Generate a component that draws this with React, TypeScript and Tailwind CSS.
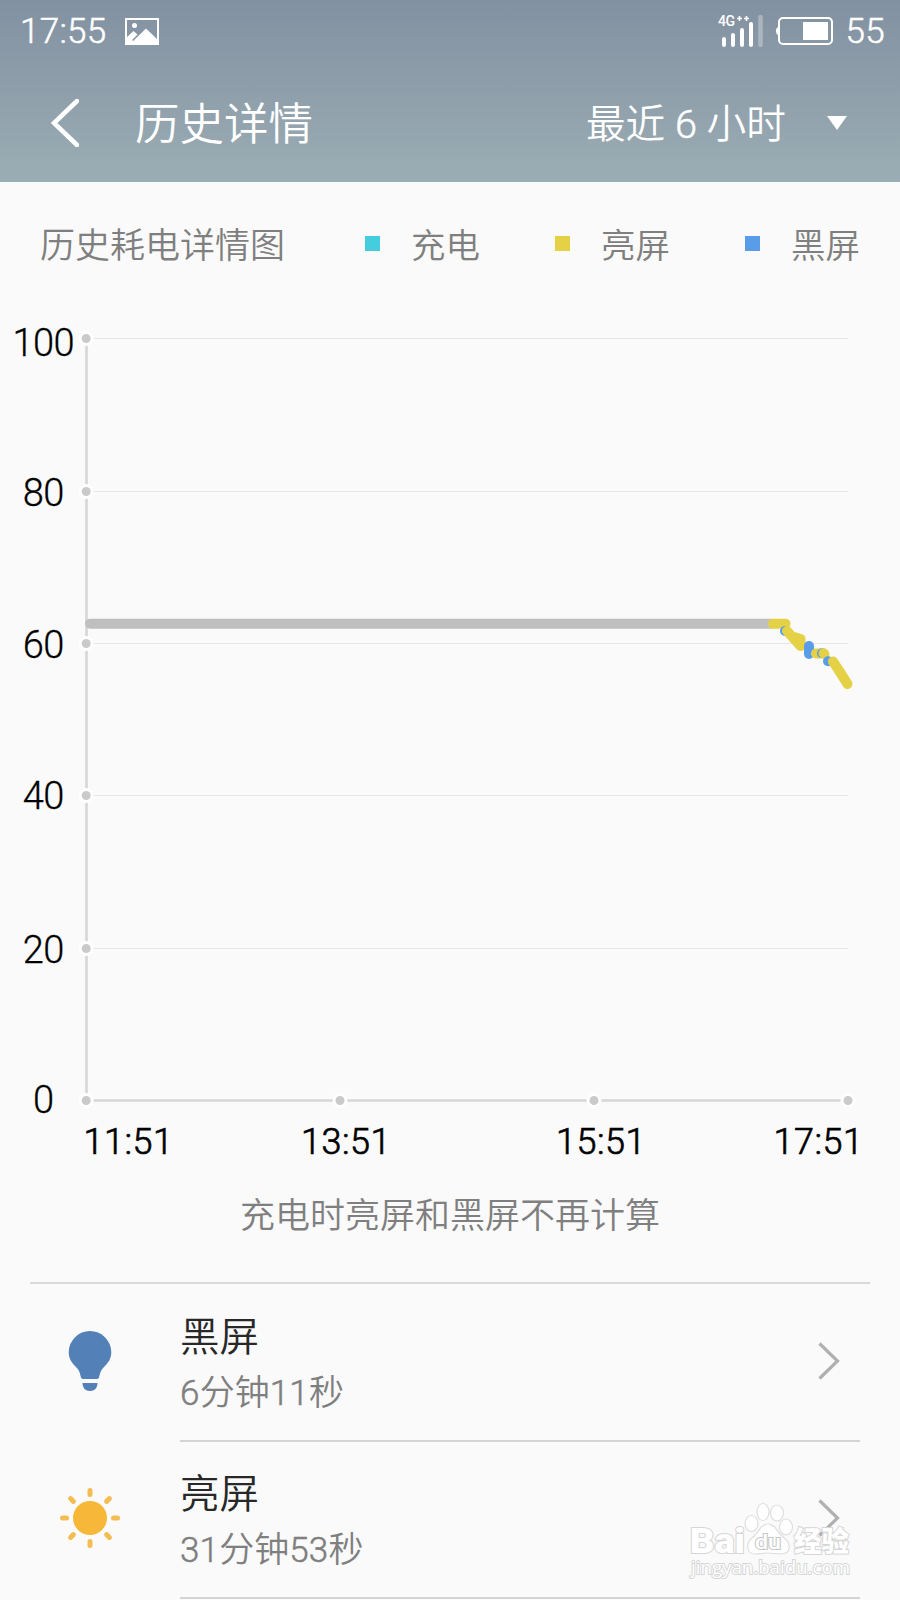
import type { ReactNode } from "react";

interface LegendItem {
  label: string;
  color: string;
}

interface UsageRowProps {
  icon: ReactNode;
  title: string;
  duration: string;
}

const LEGEND: LegendItem[] = [
  { label: "充电", color: "bg-[#44cddc]" },
  { label: "亮屏", color: "bg-[#e5d146]" },
  { label: "黑屏", color: "bg-[#599ce8]" },
];

const LEVELS = [
  { value: 100, y: 338.5, baseline: 356 },
  { value: 80, y: 491.5, baseline: 505.5 },
  { value: 60, y: 643.5, baseline: 657.5 },
  { value: 40, y: 795.5, baseline: 809 },
  { value: 20, y: 948.5, baseline: 962.5 },
  { value: 0, y: 1100.5, baseline: 1112.5 },
];

const TIMES = [
  { label: "11:51", x: 86.5, textX: 128.5 },
  { label: "13:51", x: 340, textX: 346 },
  { label: "15:51", x: 594, textX: 601 },
  { label: "17:51", x: 848, textX: 818.5 },
];

function StatusBar() {
  return (
    <div className="flex h-[62px] items-center justify-between pr-[15px] pl-5 text-[35px] font-light">
      <div className="flex items-center gap-[18px]">
        <span className="pt-[3px] tracking-[0.3px] [-webkit-text-stroke:0.5px_white]">17:55</span>
        <svg width="34" height="27" viewBox="0 0 34 27" fill="none">
          <rect x="1" y="1" width="32" height="25" stroke="white" strokeWidth="2" />
          <circle cx="9.5" cy="7.5" r="2.5" fill="white" />
          <path d="M1 20 8.5 13l4 3.5L7 22l1.2 1L21 10.5 33 22v4H1z" fill="white" />
        </svg>
      </div>
      <div className="flex items-center">
        <svg width="46" height="34" viewBox="0 0 46 34" className="mr-[12px]">
          <text x="0" y="12" fontSize="14" fontWeight="500" fill="white" textLength="17">4G</text>
          <path d="M19 4.5h5M21.5 2v5M26 4.5h5M28.5 2v5" stroke="white" strokeWidth="1.6" />
          <path d="M6 25v6M15 21v10M24 16v15M33 10v21" stroke="white" strokeWidth="4" strokeLinecap="round" />
          <path d="M42.5 3v28" stroke="white" strokeOpacity=".3" strokeWidth="4.5" strokeLinecap="round" />
        </svg>
        <svg width="57" height="28" viewBox="0 0 57 28" className="mr-[13px]">
          <rect x="3" y="1" width="53" height="26" rx="4" fill="none" stroke="white" strokeWidth="2" />
          <path d="M3 10Q0 10 0 14t3 4z" fill="white" />
          <rect x="27" y="5" width="25" height="18" fill="white" />
        </svg>
        <span className="pt-[3px] tracking-[0.3px] [-webkit-text-stroke:0.5px_white]">55</span>
      </div>
    </div>
  );
}

function Header() {
  return (
    <header className="h-[182px] bg-linear-to-b from-[#8291a1] to-[#9badb4] text-white">
      <StatusBar />
      <div className="flex h-[120px] items-center pr-[52px] pl-[51px]">
        <svg width="28" height="48" viewBox="0 0 28 48" fill="none" stroke="white" strokeWidth="4.5" className="mt-[2px]">
          <path d="M26 2 3 24l23 22" strokeLinecap="round" />
        </svg>
        <h1 className="ml-[56px] pt-[7px] text-[44.5px] font-[350]">历史详情</h1>
        <button className="ml-auto flex items-center text-[39.7px] font-[350]">
          <span className="pt-[5px]">
            最近 <span className="[-webkit-text-stroke:0.5px_white]">6</span> 小时
          </span>
          <svg width="22" height="14" viewBox="0 0 22 14" fill="white" className="mt-[2px] ml-[40px]">
            <path d="M1 0h20L11 14z" />
          </svg>
        </button>
      </div>
    </header>
  );
}

function Legend() {
  return (
    <div className="flex h-[124px] items-center pl-10 text-[35px] font-[350] text-[#7f7f7f]">
      <span className="w-[325px] shrink-0 pt-[6px]">历史耗电详情图</span>
      {LEGEND.map(item => (
        <div key={item.label} className="flex w-[190px] shrink-0 items-center">
          <i className={`mr-[31px] mb-[2px] h-[15px] w-[15px] shrink-0 ${item.color}`} />
          <span className="pt-[6px] text-[34.5px]">{item.label}</span>
        </div>
      ))}
    </div>
  );
}

function BatteryChart() {
  return (
    <svg width="900" height="864" viewBox="0 306 900 864" className="block">
      {/* grid and axes */}
      {LEVELS.slice(0, 5).map(l => (
        <path key={l.value} d={`M93 ${l.y}H848`} stroke="#e6e6e6" strokeWidth="1" />
      ))}
      <path d="M86.5 338V1100.5H848" fill="none" stroke="#d6d6d6" strokeWidth="2.6" />
      {LEVELS.map(l => (
        <circle key={l.value} cx="86.2" cy={l.y} r="6" fill="#cacaca" stroke="#fefefe" strokeWidth="3" />
      ))}
      {TIMES.slice(1).map(t => (
        <circle key={t.label} cx={t.x} cy="1100.5" r="6" fill="#cacaca" stroke="#fefefe" strokeWidth="3" />
      ))}

      {/* battery level */}
      <g fill="none" strokeWidth="10" strokeLinecap="round" strokeLinejoin="round">
        <path d="M90 623.7H772" stroke="#bfbfbf" />
        <path d="M773 623.7H785.5" stroke="#e5d146" />
        <path d="M785 631h.1" stroke="#599ce8" />
        <path d="M787 631 800.5 646V639L794 637" stroke="#e5d146" />
        <path d="M809 646v8" stroke="#599ce8" />
        <path d="M816 653.5h4" stroke="#e5d146" />
        <path d="M822 653.3h.1" stroke="#599ce8" />
        <path d="M823.5 653.3l1 1" stroke="#e5d146" />
        <path d="M828 661.3h.1" stroke="#599ce8" />
        <path d="M833 661.5 838 669 847.5 684" stroke="#e5d146" />
      </g>

      <g fontSize="38" fontWeight="300" stroke="black" strokeWidth="0.3" textAnchor="middle" letterSpacing="-0.5">
        {LEVELS.map(l => (
          <text key={l.value} x="43.3" y={l.baseline}>{l.value}</text>
        ))}
      </g>
      <g fontSize="36" fontWeight="300" stroke="black" strokeWidth="0.7" textAnchor="middle" letterSpacing="0.5">
        {TIMES.map(t => (
          <text key={t.label} x={t.textX} y="1154">{t.label}</text>
        ))}
      </g>
    </svg>
  );
}

function BulbIcon() {
  return (
    <svg width="60" height="62" viewBox="0 0 60 62" fill="#5280b7">
      <path d="M30 1A21.3 21.3 0 0 0 8.7 22C8.7 29 12 33 16 37C20 41 20 44 21 47.5Q21.5 49 23.5 49H36.5Q38.5 49 39 47.5C40 44 40 41 44 37C48 33 51.3 29 51.3 22A21.3 21.3 0 0 0 30 1Z" />
      <path d="M22.5 53H37.5C37.5 58 34.5 61 30 61S22.5 58 22.5 53Z" />
    </svg>
  );
}

function SunIcon() {
  return (
    <svg width="60" height="62" viewBox="0 0 60 62" fill="#f7b739">
      <circle cx="30" cy="31" r="17" />
      <g stroke="#f3bd52" strokeWidth="5" strokeLinecap="round">
        {[0, 45, 90, 135, 180, 225, 270, 315].map(angle => (
          <path key={angle} d="M30 3.5v4" transform={`rotate(${angle} 30 31)`} />
        ))}
      </g>
    </svg>
  );
}

function UsageRow({ icon, title, duration }: UsageRowProps) {
  return (
    <li className="flex h-[157.5px] pl-[60px]">
      <div className="flex w-[120px] shrink-0 items-center pb-[4px]">{icon}</div>
      <div className="mr-10 flex flex-1 items-center justify-between border-b-2 border-[#d4d4d4] pr-5 font-[350]">
        <div className="pt-[7px]">
          <p className="text-[39.5px] leading-[56px] text-[#282828]">{title}</p>
          <p className="text-[35px] leading-[55px] text-[#7f7f7f]">
            {duration.split(/(\d+)/).map((part, i) => (
              <span key={i} className={i % 2 ? "tracking-[0.2px] [-webkit-text-stroke:0.5px_#7f7f7f]" : ""}>
                {part}
              </span>
            ))}
          </p>
        </div>
        <svg width="22" height="38" viewBox="0 0 22 38" fill="none" stroke="#b0b0b0" strokeWidth="3.2" className="mb-[2px]">
          <path d="M1.5 1.5 19.5 19 1.5 36.5" />
        </svg>
      </div>
    </li>
  );
}

function Watermark() {
  return (
    <svg width="170" height="82" viewBox="0 0 170 82" className="absolute top-[1500px] left-[685px]">
      <g fill="#fff" stroke="#dedede" strokeWidth="1.2">
        <ellipse cx="66.5" cy="23.5" rx="6.5" ry="8" />
        <ellipse cx="78" cy="12" rx="6" ry="8.5" />
        <ellipse cx="92" cy="13" rx="6.5" ry="8" />
        <ellipse cx="101" cy="27" rx="6.5" ry="8" />
        <path d="M83 24C90 24 92 32 98 37C107 43 106 54 96 54C91 54 88 53 83 53S75 54 70 54C62 54 60 44 67 38C74 32 76 24 83 24Z" />
      </g>
      <g fill="#fff" stroke="#d6d6d6" strokeWidth="2" paintOrder="stroke" fontWeight="700">
        <text x="5" y="53" fontSize="35" fontWeight="900" textLength="55" lengthAdjust="spacingAndGlyphs">Bai</text>
        <text x="70" y="49" fontSize="20" fontWeight="500" stroke="#c8c8c8" textLength="26" lengthAdjust="spacingAndGlyphs">du</text>
        <text x="109" y="52" fontSize="28" fontWeight="900" textLength="55" lengthAdjust="spacingAndGlyphs">经验</text>
        <text
          x="6"
          y="74"
          fontSize="19"
          fontWeight="400"
          textLength="159"
          lengthAdjust="spacingAndGlyphs"
          className="font-['Open_Sans',sans-serif]"
        >
          jingyan.baidu.com
        </text>
      </g>
    </svg>
  );
}

export default function App() {
  return (
    <div className="relative h-[1600px] w-[900px] overflow-hidden bg-[#fafafa] font-[Roboto,'Noto_Sans_CJK_SC',sans-serif]">
      <Header />
      <Legend />
      <BatteryChart />
      <p className="flex h-[90px] items-center justify-center pt-[5px] text-[35px] font-[350] text-[#7f7f7f]">
        充电时亮屏和黑屏不再计算
      </p>
      <div className="mx-[30px] mt-[22px] h-[2px] bg-[#d8d8d8]" />
      <ul>
        <UsageRow icon={<BulbIcon />} title="黑屏" duration="6分钟11秒" />
        <UsageRow icon={<SunIcon />} title="亮屏" duration="31分钟53秒" />
      </ul>
      <Watermark />
    </div>
  );
}
